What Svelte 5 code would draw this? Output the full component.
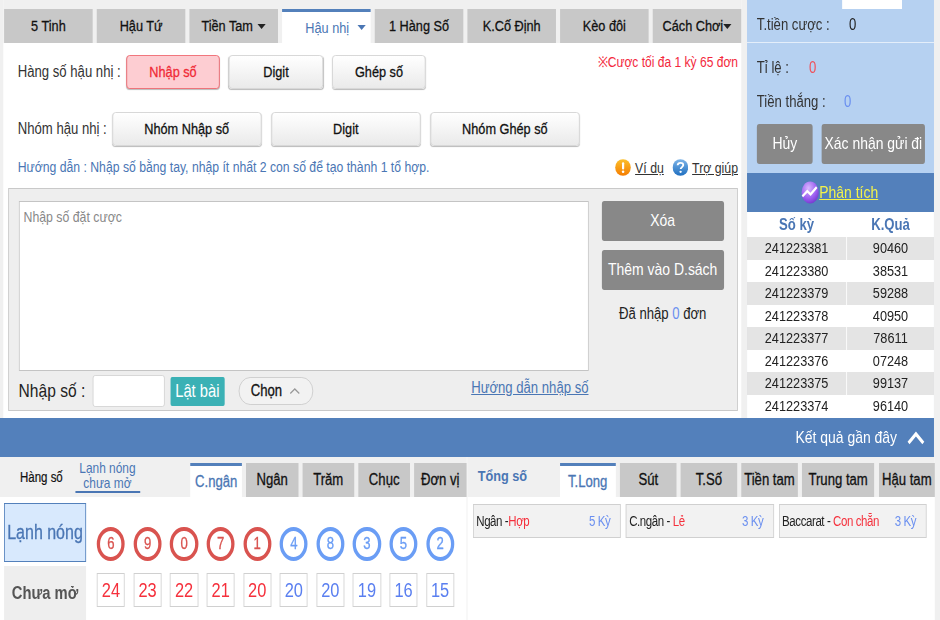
<script>
  const tabs = [
    { label: '5 Tinh' },
    { label: 'Hậu Tứ' },
    { label: 'Tiền Tam', caret: true },
    { label: 'Hậu nhị', caret: true, active: true },
    { label: '1 Hàng Số' },
    { label: 'K.Cố Định' },
    { label: 'Kèo đôi' },
    { label: 'Cách Chơi', caret: true, tight: true }
  ];

  const history = [
    ['241223381', '90460'],
    ['241223380', '38531'],
    ['241223379', '59288'],
    ['241223378', '40950'],
    ['241223377', '78611'],
    ['241223376', '07248'],
    ['241223375', '99137'],
    ['241223374', '96140']
  ];

  const hot = [
    { n: 6, count: 24, hot: true },
    { n: 9, count: 23, hot: true },
    { n: 0, count: 22, hot: true },
    { n: 7, count: 21, hot: true },
    { n: 1, count: 20, hot: true },
    { n: 4, count: 20 },
    { n: 8, count: 20 },
    { n: 3, count: 19 },
    { n: 5, count: 16 },
    { n: 2, count: 15 }
  ];

  const posTabs = ['C.ngân', 'Ngân', 'Trăm', 'Chục', 'Đơn vị'];
  const sumTabs = ['T.Long', 'Sút', 'T.Số', 'Tiền tam', 'Trung tam', 'Hậu tam'];
  const streaks = [
    { name: 'Ngân -', value: 'Hợp', ky: '5 Kỳ' },
    { name: 'C.ngân - ', value: 'Lẻ', ky: '3 Kỳ' },
    { name: 'Baccarat - ', value: 'Con chẵn', ky: '3 Kỳ' }
  ];
</script>

<div class="page">
  <div class="top">
    <div class="main">
      <div class="tabs">
        {#each tabs as tab}
          <div class="tab" class:active={tab.active} class:tight={tab.tight}>
            {tab.label}{#if tab.caret}<i class="caret"></i>{/if}
          </div>
        {/each}
      </div>

      <div class="form">
        <span class="limit">※Cược tối đa 1 kỳ 65 đơn</span>
        <div class="row first">
          <span class="label">Hàng số hậu nhị :</span>
          <button class="opt picked">Nhập số</button>
          <button class="opt">Digit</button>
          <button class="opt">Ghép số</button>
        </div>
        <div class="row second">
          <span class="label">Nhóm hậu nhị :</span>
          <button class="opt wide">Nhóm Nhập số</button>
          <button class="opt wide">Digit</button>
          <button class="opt wide">Nhóm Ghép số</button>
        </div>
        <div class="hint">
          <span>Hướng dẫn : Nhập số bằng tay, nhập ít nhất 2 con số để tạo thành 1 tổ hợp.</span>
          <span class="helps">
            <svg width="19.5" height="17" viewBox="0 0 16 18" preserveAspectRatio="none">
              <defs>
                <linearGradient id="org" x1="0" y1="0" x2="0" y2="1">
                  <stop offset="0" stop-color="#fbc02d" />
                  <stop offset="1" stop-color="#f57c00" />
                </linearGradient>
              </defs>
              <ellipse cx="8" cy="9" rx="7.8" ry="8.8" fill="url(#org)" />
              <rect x="7" y="3.5" width="2.2" height="7.5" rx="1" fill="#fff" />
              <circle cx="8.1" cy="13.5" r="1.3" fill="#fff" />
            </svg>
            <a href="#vd">Ví dụ</a>
            <svg class="q" width="19.5" height="17" viewBox="0 0 16 18" preserveAspectRatio="none">
              <defs>
                <linearGradient id="blu" x1="0" y1="0" x2="0" y2="1">
                  <stop offset="0" stop-color="#7db4e8" />
                  <stop offset="1" stop-color="#1f6fc0" />
                </linearGradient>
              </defs>
              <ellipse cx="8" cy="9" rx="7.8" ry="8.8" fill="url(#blu)" />
              <path d="M5.2 6.6C5.4 4.8 6.6 4 8.1 4c1.7 0 2.8 1 2.8 2.4 0 2-2.6 2.2-2.6 4.3" fill="none" stroke="#fff" stroke-width="1.8" />
              <circle cx="8.2" cy="13.6" r="1.2" fill="#fff" />
            </svg>
            <a href="#tg">Trợ giúp</a>
          </span>
        </div>

        <div class="entry">
          <div class="entry-top">
            <textarea placeholder="Nhập số đặt cược"></textarea>
            <div class="actions">
              <button class="grey">Xóa</button>
              <button class="grey">Thêm vào D.sách</button>
              <p>Đã nhập <b>0</b> đơn</p>
            </div>
          </div>
          <div class="entry-foot">
            <span class="big">Nhập số :</span>
            <input type="text" />
            <button class="flip">Lật bài</button>
            <button class="pick">
              Chọn
              <svg width="15" height="8" viewBox="0 0 15 8"><path d="M2 6.5 7.5 2 13 6.5" fill="none" stroke="#999" stroke-width="1.6" /></svg>
            </button>
            <a class="guide" href="#hd">Hướng dẫn nhập số</a>
          </div>
        </div>
      </div>
    </div>

    <aside class="side">
      <div class="stake">
        <div class="cut"><input type="text" /></div>
        <div class="line">T.tiền cược : <span class="val">0</span></div>
      </div>
      <div class="odds">
        <div class="line rate">Tỉ lệ : <span class="red">0</span></div>
        <div class="line win">Tiền thắng : <span class="blue">0</span></div>
        <div class="side-btns">
          <button class="grey cancel">Hủy</button>
          <button class="grey send">Xác nhận gửi đi</button>
        </div>
      </div>
      <div class="analysis">
        <svg width="22" height="23" viewBox="0 0 22 24" preserveAspectRatio="none">
          <defs>
            <radialGradient id="pur" cx="0.4" cy="0.3" r="0.8">
              <stop offset="0" stop-color="#d9b8ff" />
              <stop offset="0.6" stop-color="#9a5cf0" />
              <stop offset="1" stop-color="#6a2fc4" />
            </radialGradient>
          </defs>
          <ellipse cx="11" cy="12" rx="10.5" ry="11.5" fill="url(#pur)" />
          <path d="M1.5 16l6-5.5 4 3.5L19 6.5" fill="none" stroke="#fff" stroke-width="2.6" />
        </svg>
        <a href="#pt">Phân tích</a>
      </div>
      <div class="history">
        <div class="h-row head"><span>Số kỳ</span><span>K.Quả</span></div>
        {#each history as [ky, res]}
          <div class="h-row"><span>{ky}</span><span>{res}</span></div>
        {/each}
      </div>
    </aside>
  </div>

  <div class="banner">
    Kết quả gần đây
    <svg width="22" height="14" viewBox="0 0 22 14"><path d="M2 12 11 3l9 9" fill="none" stroke="#fff" stroke-width="3.4" /></svg>
  </div>

  <div class="bottom">
    <section class="left-pane">
      <div class="bar">
        <span class="plain">Hàng số</span>
        <span class="under">Lạnh nóng<br />chưa mở</span>
        <div class="mini-tabs pos">
          {#each posTabs as t, i}
            <div class="mini" class:on={i === 0}>{t}</div>
          {/each}
        </div>
      </div>
      <div class="stats">
        <div class="stat-side">
          <div class="side-tab on">Lạnh nóng</div>
          <div class="side-tab">Chưa mở</div>
        </div>
        <div class="stat-grid">
          {#each hot as h}
            <div class="ball" class:hot={h.hot}>{h.n}</div>
          {/each}
          {#each hot as h}
            <div class="count" class:hot={h.hot}>{h.count}</div>
          {/each}
        </div>
      </div>
    </section>
    <section class="right-pane">
      <div class="bar">
        <span class="sum">Tổng số</span>
        <div class="mini-tabs sums">
          {#each sumTabs as t, i}
            <div class="mini" class:on={i === 0} class:long={t === 'Trung tam'}>{t}</div>
          {/each}
        </div>
      </div>
      <div class="cards">
        {#each streaks as s}
          <div class="card">
            <span>{s.name}<em>{s.value}</em></span>
            <b>{s.ky}</b>
          </div>
        {/each}
      </div>
    </section>
  </div>
</div>

<style>
  :global(body) {
    background: #f0f0f0;
    overflow: hidden;
  }

  /* the whole page is squeezed horizontally, so widths below are before the squeeze */
  .page {
    width: 1146px;
    height: 620px;
    overflow: hidden;
    transform: scaleX(0.82);
    transform-origin: 0 0;
    font-family: "Liberation Sans", Arial, sans-serif;
    font-size: 16px;
    color: #222;
  }

  button {
    font-family: inherit;
    cursor: pointer;
  }

  .top {
    display: flex;
    height: 418px;
    padding-left: 3.7px;
    gap: 7.3px;
  }

  .main {
    width: 900px;
    background: #fff;
    display: flex;
    flex-direction: column;
  }

  .tabs {
    display: flex;
    gap: 4.6px;
    padding: 9px 0 0 1.2px;
    background: #f0f0f0;
  }

  .tab {
    flex: none;
    width: 108.4px;
    height: 34px;
    box-sizing: border-box;
    background: #c8c8c8;
    color: #111;
    font-size: 15.5px;
    -webkit-text-stroke: 0.3px #111;
    display: flex;
    align-items: center;
    justify-content: center;
    white-space: nowrap;
  }

  .tab.active {
    background: #fff;
    border-top: 3px solid #5380bb;
    color: #4a76b4;
    -webkit-text-stroke: 0;
    padding-left: 22px;
  }

  .caret {
    display: inline-block;
    margin-left: 6px;
    border-left: 5px solid transparent;
    border-right: 5px solid transparent;
    border-top: 5px solid #222;
  }

  .tab.active .caret {
    margin-left: 10px;
    border-top-color: #4a76b4;
  }

  .tab.tight .caret {
    margin-left: 0;
  }

  .form {
    flex: 1;
    position: relative;
    padding: 0 3.7px 0 6px;
  }

  .limit {
    position: absolute;
    top: 8px;
    right: 3.7px;
    color: #f3283c;
    font-size: 14.7px;
  }

  .row {
    display: flex;
    align-items: center;
    padding-left: 12px;
  }

  .row.first {
    margin-top: 12px;
    gap: 11px;
  }

  .row.first .label {
    width: 121px;
  }

  .row.second {
    margin-top: 23px;
    gap: 12px;
  }

  .row.second .label {
    width: 103px;
  }

  .label {
    white-space: nowrap;
    color: #333;
  }

  .opt {
    width: 114.6px;
    height: 34px;
    padding: 0;
    border: 1px solid #d4d4d4;
    border-radius: 4px;
    background: linear-gradient(#fff, #eaeaea);
    box-shadow: 0 1px 1px #bbb;
    color: #111;
    font-size: 15.5px;
    -webkit-text-stroke: 0.3px #111;
  }

  .opt.wide {
    width: 182px;
  }

  .opt.picked {
    background: #fdcdd2;
    border-color: #ef6a72;
    color: #f02a36;
    -webkit-text-stroke: 0.3px #f02a36;
  }

  .hint {
    display: flex;
    justify-content: space-between;
    align-items: center;
    margin-top: 11px;
    height: 20px;
    padding-left: 12px;
    color: #4a76b4;
    font-size: 14.9px;
  }

  .helps {
    display: flex;
    align-items: center;
    gap: 5px;
    font-size: 15px;
  }

  .helps .q {
    margin-left: 5px;
  }

  .helps a {
    color: #333;
  }

  .entry {
    margin-top: 11px;
    height: 223px;
    box-sizing: border-box;
    background: #eee;
    border: 1px solid #c9c9c9;
    padding: 12px 0 0 12px;
  }

  .entry-top {
    display: flex;
    gap: 16px;
  }

  textarea {
    display: block;
    width: 695px;
    height: 170px;
    box-sizing: border-box;
    padding: 6px 5px;
    border: 1px solid #c4c4c4;
    background: #fff;
    resize: none;
    font-family: inherit;
    font-size: 15px;
  }

  textarea::placeholder {
    color: #888;
    opacity: 1;
  }

  .actions {
    width: 149px;
    display: flex;
    flex-direction: column;
    gap: 9px;
    text-align: center;
  }

  .grey {
    background: #888;
    border: none;
    border-radius: 3px;
    color: #fff;
    font-size: 17px;
    height: 40px;
    padding: 0;
    white-space: nowrap;
  }

  .actions p {
    margin: 6px 0 0;
    color: #222;
  }

  .actions b {
    font-weight: normal;
    color: #6a8ff0;
  }

  .entry-foot {
    display: flex;
    align-items: center;
    margin-top: 4px;
    width: 695px;
    height: 32px;
  }

  .big {
    font-size: 19px;
    color: #222;
    width: 90px;
    white-space: nowrap;
  }

  .entry-foot input {
    width: 88px;
    height: 32px;
    box-sizing: border-box;
    border: 1px solid #d4d4d4;
    border-radius: 3px;
    background: #fff;
  }

  .flip {
    margin-left: 7px;
    width: 66px;
    height: 29px;
    border: none;
    border-radius: 2px;
    background: #3bb1b5;
    color: #fff;
    font-size: 18px;
    padding: 0;
    white-space: nowrap;
  }

  .pick {
    margin-left: 17px;
    width: 91.5px;
    height: 28px;
    border: 1px solid #ccc;
    border-radius: 14px;
    background: #f2f2f2;
    font-size: 16px;
    color: #111;
    -webkit-text-stroke: 0.3px #111;
    display: flex;
    align-items: center;
    justify-content: center;
    gap: 8px;
    padding: 0;
  }

  .guide {
    margin-left: auto;
    margin-bottom: 7px;
    color: #4a76b4;
    font-size: 16px;
  }

  .side {
    width: 228px;
    background: #b6d1f1;
    display: flex;
    flex-direction: column;
  }

  .stake {
    height: 42px;
    padding-left: 12px;
    border-bottom: 1px solid #e4eefa;
  }

  .cut {
    height: 9px;
    overflow: hidden;
    padding-left: 104px;
  }

  .cut input {
    display: block;
    width: 73px;
    height: 9px;
    padding: 0;
    border: none;
    background: #fff;
  }

  .line {
    color: #333;
    white-space: nowrap;
  }

  .stake .line {
    margin-top: 7px;
  }

  .val {
    margin-left: 19px;
    color: #222;
  }

  .odds {
    height: 130px;
    box-sizing: border-box;
    padding: 16px 0 0 12px;
  }

  .rate .red {
    margin-left: 20px;
    color: #f0505a;
  }

  .win {
    margin-top: 16px;
  }

  .win .blue {
    margin-left: 18px;
    color: #6a8ff0;
  }

  .side-btns {
    display: flex;
    gap: 11px;
    margin-top: 13px;
  }

  .cancel {
    width: 68.3px;
  }

  .send {
    width: 125.6px;
  }

  .analysis {
    height: 39px;
    background: #5380bb;
    display: flex;
    align-items: center;
    justify-content: center;
    padding-right: 2px;
  }

  .analysis a {
    color: #f4f24a;
    font-size: 17px;
    padding-top: 1px;
  }

  .history {
    flex: 1;
    background: #fff;
    font-size: 15.5px;
  }

  .h-row {
    display: grid;
    grid-template-columns: 122px 106px;
    height: 22.5px;
    line-height: 22.5px;
    text-align: center;
  }

  .h-row span:first-child {
    border-right: 1px solid #fff;
  }

  .h-row:nth-child(even) {
    background: #e4e4e4;
  }

  .h-row.head {
    height: 25px;
    line-height: 25px;
    color: #4a76b4;
    font-weight: bold;
    font-size: 16px;
  }

  .banner {
    height: 39px;
    width: 1139px;
    background: #5380bb;
    color: #fff;
    display: flex;
    align-items: center;
    justify-content: flex-end;
    gap: 12px;
    padding-right: 11px;
    box-sizing: border-box;
    font-size: 17px;
  }

  .bottom {
    display: flex;
    height: 163px;
    background: #fff;
    width: 1140px;
  }

  .left-pane {
    width: 569.5px;
    border-right: 1px solid #eee;
    box-sizing: border-box;
  }

  .right-pane {
    flex: 1;
  }

  .bar {
    position: relative;
    height: 40px;
    background: #f0f0f0;
    display: flex;
    align-items: flex-end;
  }

  .plain {
    position: absolute;
    left: 24.4px;
    top: 12px;
    font-size: 14px;
    color: #111;
    -webkit-text-stroke: 0.2px #111;
  }

  .under {
    position: absolute;
    left: 91.5px;
    top: 4px;
    width: 79px;
    height: 30px;
    border-bottom: 2px solid #4a76b4;
    text-align: center;
    font-size: 14.5px;
    line-height: 15px;
    color: #4a76b4;
    white-space: nowrap;
  }

  .sum {
    position: absolute;
    left: 13px;
    top: 10px;
    font-size: 15.5px;
    color: #4a76b4;
    font-weight: bold;
  }

  .mini-tabs {
    display: flex;
    height: 34px;
    margin-left: auto;
  }

  .mini-tabs.pos {
    gap: 4.9px;
  }

  .mini-tabs.sums {
    gap: 5.6px;
  }

  .mini {
    width: 63.4px;
    height: 34px;
    box-sizing: border-box;
    background: #c8c8c8;
    color: #111;
    font-size: 16px;
    -webkit-text-stroke: 0.3px #111;
    display: flex;
    align-items: center;
    justify-content: center;
    white-space: nowrap;
  }

  .sums .mini {
    width: 68.3px;
  }

  .sums .mini.long {
    width: 88px;
  }

  .mini.on {
    background: #fff;
    border-top: 3px solid #5380bb;
    color: #4a76b4;
    -webkit-text-stroke: 0.3px #4a76b4;
  }

  .stats {
    display: flex;
    padding: 6px 0 0 4.9px;
  }

  .stat-side {
    width: 100px;
    display: flex;
    flex-direction: column;
    gap: 4px;
  }

  .side-tab {
    height: 54px;
    background: #eee;
    color: #555;
    font-size: 18px;
    font-weight: bold;
    display: flex;
    align-items: center;
    justify-content: center;
    white-space: nowrap;
  }

  .side-tab.on {
    height: 59px;
    box-sizing: border-box;
    background: #d8e9fd;
    border: 1px solid #5380bb;
    color: #4a76b4;
    font-weight: normal;
    font-size: 19.5px;
    -webkit-text-stroke: 0.3px #4a76b4;
  }

  .stat-grid {
    margin: 24px 0 0 13.4px;
    display: grid;
    grid-template-columns: repeat(10, 34.1px);
    grid-auto-rows: 34px;
    column-gap: 10.5px;
    row-gap: 12px;
  }

  .ball {
    box-sizing: border-box;
    border: 4px solid #6a9df5;
    border-radius: 50%;
    color: #6a9df5;
    font-size: 16px;
    -webkit-text-stroke: 0.3px #6a9df5;
    display: flex;
    align-items: center;
    justify-content: center;
  }

  .ball.hot {
    border-color: #d9534f;
    color: #d9534f;
    -webkit-text-stroke: 0.3px #d9534f;
  }

  .count {
    box-sizing: border-box;
    border: 1px solid #d0d0d0;
    color: #5a7ff0;
    font-size: 20px;
    display: flex;
    align-items: center;
    justify-content: center;
  }

  .count.hot {
    color: #f5303c;
  }

  .cards {
    display: flex;
    gap: 6px;
    padding: 7px 0 0 7.3px;
  }

  .card {
    width: 180.5px;
    height: 34px;
    box-sizing: border-box;
    background: #f2f2f2;
    border: 1px solid #d0d0d0;
    padding: 0 12px 0 3px;
    display: flex;
    align-items: center;
    justify-content: space-between;
    font-size: 14px;
    white-space: nowrap;
    letter-spacing: -0.5px;
  }

  .card em {
    font-style: normal;
    color: #f5303c;
  }

  .card b {
    font-weight: normal;
    color: #6a8ff0;
  }
</style>
